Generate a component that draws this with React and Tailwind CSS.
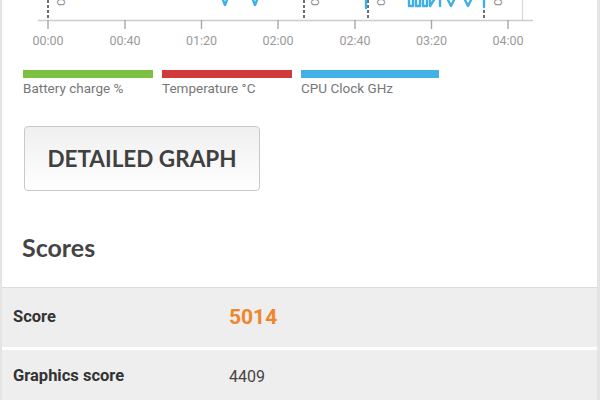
export default function App() {
  const ticks = [
    [48, "00:00"],
    [125, "00:40"],
    [201.5, "01:20"],
    [278, "02:00"],
    [355, "02:40"],
    [431.5, "03:20"],
    [508, "04:00"],
  ];
  const dashes = [48, 304, 368, 484];
  const labels = [62, 316, 382, 499];
  return (
    <div className="w-[600px] h-[400px] overflow-hidden bg-[#f3f3f3]">
      <div className="h-full bg-white border-l-2 border-r-[3px] border-[#e4e4e4] flex flex-col">
        <svg width="595" height="70" className="block shrink-0">
          <line x1="520.5" y1="0" x2="520.5" y2="20" stroke="#d8d8d8" strokeWidth="1.2" />
          <line x1="36" y1="20.5" x2="531" y2="20.5" stroke="#cccccc" strokeWidth="1.5" />
          {ticks.map(([x, t]) => (
            <g key={t}>
              <line x1={x - 2} y1="20" x2={x - 2} y2="29" stroke="#a8a8a8" strokeWidth="1.4" />
              <text
                x={x - 2}
                y="44.5"
                textAnchor="middle"
                fontFamily="Roboto, sans-serif"
                fontSize="12.5"
                fill="#9a9a9a"
              >
                {t}
              </text>
            </g>
          ))}
          {dashes.map((x) => (
            <line key={x} x1={x - 2} y1="0" x2={x - 2} y2="20" stroke="#333" strokeWidth="1.4" strokeDasharray="3 2" />
          ))}
          {labels.map((x) => (
            <text
              key={x}
              x="0"
              y="0"
              transform={`translate(${x - 2} 6) rotate(-90)`}
              fontFamily="Roboto, sans-serif"
              fontSize="11"
              fill="#8a8a8a"
              dominantBaseline="middle"
            >
              On
            </text>
          ))}
          <g stroke="#3fb0e6" strokeWidth="2.4" fill="none" strokeLinecap="round" strokeLinejoin="round">
            <path d="M221 0 L223 5 L225 0" />
            <path d="M251 0 L253 5 L255 0" />
            <path d="M364 0 V8" />
            <path d="M407 0 V6 H411 V0 M414 0 V6 H418 V0 M421 0 V6 H425 V0 M428 0 V6 L432 0 M438 0 V6 M446 0 L449 6 L452 0 M463 0 L466 6 L469 0 M482 0 V7" />
          </g>
        </svg>

        <div className="flex gap-[9px] pl-[21px] font-['Roboto',sans-serif] text-[13.5px] text-[#777] leading-[14px]">
          <div className="w-[130px]">
            <div className="h-[8px] bg-[#7cc142]" />
            <div className="mt-[3px]">Battery charge %</div>
          </div>
          <div className="w-[130px]">
            <div className="h-[8px] bg-[#d13a3b]" />
            <div className="mt-[3px]">Temperature °C</div>
          </div>
          <div className="w-[138px]">
            <div className="h-[8px] bg-[#41b1e6]" />
            <div className="mt-[3px]">CPU Clock GHz</div>
          </div>
        </div>

        <div className="mt-[31px] ml-[22px] w-[236px] h-[65px] border border-[#c9c9c9] rounded-[4px] bg-gradient-to-b from-[#efefef] to-white flex items-center justify-center font-['Lato',sans-serif] font-bold text-[22.5px] text-[#404040] shrink-0">
          DETAILED GRAPH
        </div>

        <div className="mt-[41px] pl-[20px] h-[30px] leading-[30px] font-['Lato',sans-serif] font-bold text-[25px] text-[#444] shrink-0">
          Scores
        </div>

        <div className="mt-[25px] border-t border-[#dcdcdc] shrink-0" />

        <div className="h-[59px] bg-[#eeeeee] flex items-center pl-[11px] font-['Roboto',sans-serif] shrink-0">
          <div className="w-[216px] font-bold text-[16.5px] text-[#333]">Score</div>
          <div className="font-bold text-[21px] text-[#f0862b]">5014</div>
        </div>
        <div className="h-[3px] shrink-0" />
        <div className="h-[53px] bg-[#eeeeee] flex items-center pl-[11px] font-['Roboto',sans-serif] shrink-0">
          <div className="w-[216px] font-bold text-[16.5px] text-[#333]">Graphics score</div>
          <div className="text-[16px] text-[#444]">4409</div>
        </div>
      </div>
    </div>
  );
}
